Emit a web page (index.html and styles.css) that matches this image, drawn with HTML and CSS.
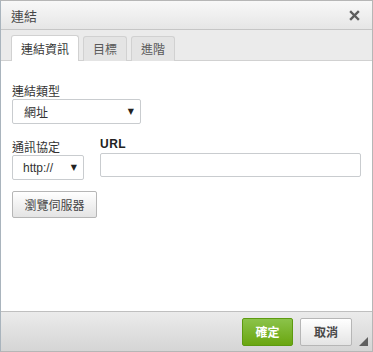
FILE: index.html
```html
<!DOCTYPE html>
<html>
<head>
<meta charset="utf-8">
<link rel="stylesheet" href="styles.css">
</head>
<body>
<div class="dialog">
  <div class="titlebar">
    <span class="title">連結</span>
    <span class="close">
      <svg width="11" height="11" viewBox="0 0 11 11"><path d="M2 2 L9 9 M9 2 L2 9" stroke="#5e5e5e" stroke-width="2.4" stroke-linecap="square"/></svg>
    </span>
  </div>
  <div class="tabs">
    <div class="tab active">連結資訊</div>
    <div class="tab">目標</div>
    <div class="tab">進階</div>
  </div>
  <div class="body">
    <div class="field">
      <label class="label">連結類型</label>
      <div class="select wide"><span>網址</span><span class="arrow">▼</span></div>
    </div>
    <div class="row">
      <div class="field">
        <label class="label">通訊協定</label>
        <div class="select proto"><span>http://</span><span class="arrow">▼</span></div>
      </div>
      <div class="field grow">
        <label class="label bold">URL</label>
        <div class="input"></div>
      </div>
    </div>
    <div class="btn browse">瀏覽伺服器</div>
  </div>
  <div class="footer">
    <div class="btn ok">確定</div>
    <div class="btn cancel">取消</div>
    <svg class="grip" width="9" height="9" viewBox="0 0 9 9"><path d="M9 0 L9 9 L0 9 Z" fill="#606060"/></svg>
  </div>
</div>
</body>
</html>
```
FILE: styles.css
```css
html, body { margin: 0; padding: 0; }
body {
  width: 373px; height: 352px;
  font-family: "Noto Sans CJK TC", "Liberation Sans", sans-serif;
  font-size: 12px;
  line-height: 14px;
  color: #333;
  background: #fff;
}
.dialog {
  box-sizing: border-box;
  width: 373px; height: 352px;
  border: 1px solid #b6b6b6;
  border-left-color: #a9b4bd;
  display: flex; flex-direction: column;
  background: #fff;
}
.titlebar {
  height: 28px;
  background: linear-gradient(#f8f8f8, #e6e6e6);
  border-bottom: 1px solid #c6c6c6;
  display: flex; align-items: center; justify-content: space-between;
  padding: 0 12px 0 10px;
  flex: none;
}
.title { font-size: 13px; color: #474747; line-height: 1; }
.close { display: flex; }
.tabs {
  height: 31px; box-sizing: border-box;
  background: #ebebeb;
  border-bottom: 1px solid #d1d1d1;
  display: flex; align-items: flex-end; gap: 4px;
  padding-left: 10px;
  flex: none;
}
.tab {
  box-sizing: border-box;
  padding: 0 9px;
  border: 1px solid #d1d1d1; border-bottom: none;
  border-radius: 3px 3px 0 0;
  background: #e4e4e4;
  color: #595959;
  font-size: 12px;
  display: flex; align-items: center;
  margin-bottom: -1px;
  height: 25px;
}
.tab.active { background: #fff; color: #383838; padding: 0 9px; height: 26px; }
.body {
  flex: 1;
  padding: 23px 11px 0 11px;
  display: flex; flex-direction: column; align-items: flex-start;
}
.field { display: flex; flex-direction: column; }
.label { font-size: 12px; color: #333; line-height: 14px; margin-bottom: 1px; }
.label.bold { font-family: "Liberation Sans", sans-serif; font-weight: bold; font-size: 12px; color: #222; letter-spacing: 0.5px; margin-bottom: 2px; margin-top: -3px; }
.select {
  box-sizing: border-box;
  height: 25px;
  border: 1px solid #c9cccf;
  border-radius: 2px;
  background: #fff;
  display: flex; align-items: center; justify-content: space-between;
  padding: 0 6px 0 11px;
  font-size: 12px; color: #333;
}
.select.wide { width: 129px; }
.select.proto { width: 72px; height: 25px; padding-left: 10px; font-family: "Liberation Sans", sans-serif; font-size: 12px; }
.arrow { font-family: "DejaVu Sans", sans-serif; font-size: 8px; color: #222; }
.row { display: flex; gap: 16px; margin-top: 16px; width: 100%; }
.grow { flex: 1; }
.input {
  box-sizing: border-box;
  height: 24px; width: 261px;
  border: 1px solid #c9cccf;
  border-radius: 2px;
}
.btn {
  box-sizing: border-box;
  display: flex; align-items: center; justify-content: center;
  border: 1px solid #b6b6b6;
  border-radius: 2px;
  background: linear-gradient(#ffffff, #e4e4e4);
  font-size: 12px; color: #474747;
}
.browse { width: 85px; height: 27px; margin-top: 11px; }
.footer {
  height: 39px; flex: none;
  background: linear-gradient(#ebebeb, #d5d5d5);
  border-top: 1px solid #bfbfbf;
  display: flex; align-items: center; justify-content: flex-end;
  gap: 7px;
  padding-right: 20px;
  position: relative;
}
.ok {
  width: 51px; height: 28px;
  background: linear-gradient(#8bc34a, #6aa610);
  border-color: #5d9a10;
  color: #fff; font-weight: bold;
}
.cancel { width: 52px; height: 28px; font-weight: bold; color: #474747; }
.grip { position: absolute; right: 4px; bottom: 5px; }
```
